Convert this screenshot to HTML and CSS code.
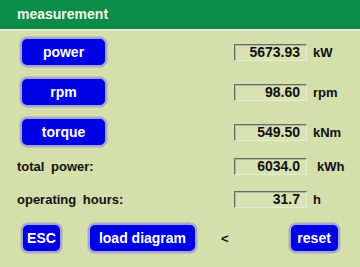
FILE: index.html
```html
<!DOCTYPE html>
<html lang="en">

<head>
    <meta charset="UTF-8" />
    <meta name="viewport" content="width=device-width, initial-scale=1.0" />
    <title>measurement</title>
    <link rel="stylesheet" href="styles.css">
</head>

<body>
    <div class="header">measurement</div>

    <div class="panel">
        <div class="row btn-row">
            <button class="btn btn-main">power</button>
            <div class="value-box">5673.93</div>
            <span class="unit">kW</span>
        </div>
        <div class="row btn-row">
            <button class="btn btn-main">rpm</button>
            <div class="value-box">98.60</div>
            <span class="unit">rpm</span>
        </div>
        <div class="row btn-row">
            <button class="btn btn-main">torque</button>
            <div class="value-box">549.50</div>
            <span class="unit">kNm</span>
        </div>

        <div class="row text-row first-text">
            <span class="label">total power:</span>
            <div class="value-box">6034.0</div>
            <span class="unit unit-wide">kWh</span>
        </div>
        <div class="row text-row">
            <span class="label">operating hours:</span>
            <div class="value-box">31.7</div>
            <span class="unit">h</span>
        </div>

        <div class="footer">
            <button class="btn btn-esc">ESC</button>
            <button class="btn btn-load">load diagram</button>
            <span class="arrow">&lt;</span>
            <button class="btn btn-reset">reset</button>
        </div>
    </div>
</body>

</html>
```

FILE: styles.css
```css
body {
    margin: 0;
    width: 360px;
    height: 267px;
    overflow: hidden;
    background: #d4dfab;
    font-family: "Liberation Sans", Arial, sans-serif;
    font-weight: bold;
    color: #111;
}

.header {
    height: 29px;
    line-height: 28px;
    padding-left: 17px;
    background: #0b8d47;
    color: #f4f8f0;
    font-size: 14px;
    border-bottom: 2px solid #e2ead0;
}

.panel {
    padding: 6px 0 0 20px;
}

.row {
    display: flex;
    align-items: center;
}

.btn-row {
    height: 30px;
    margin-bottom: 10px;
}

.text-row {
    height: 17px;
    margin-bottom: 16px;
}

.first-text {
    margin-top: 11px;
}

.btn {
    height: 30px;
    padding: 0;
    background: #0000e4;
    color: #fff;
    font-family: "Liberation Sans", Arial, sans-serif;
    font-weight: bold;
    font-size: 14px;
    border: 2px solid #a4a4d4;
    border-radius: 7px;
    box-shadow: 0 0 0 1px #c4c8b0;
    cursor: pointer;
}

.btn-main {
    width: 87px;
}

.label {
    width: 217px;
    margin-left: -3px;
    font-size: 13px;
    word-spacing: 3px;
}

.btn-row .value-box {
    margin-left: 127px;
}

.value-box {
    box-sizing: border-box;
    width: 73px;
    height: 17px;
    padding-right: 6px;
    text-align: right;
    font-size: 14px;
    line-height: 15px;
    background: #d8e2b2;
    border: 1px solid;
    border-color: #6c6c66 #e6ecd2 #e6ecd2 #6c6c66;
    box-shadow: inset 1px 1px 0 #b0b6a0;
}

.unit {
    margin-left: 6px;
    font-size: 13px;
}

.unit-wide {
    margin-left: 10px;
}

.footer {
    display: flex;
    align-items: center;
    height: 30px;
    margin-top: -1px;
}

.btn-esc {
    width: 41px;
    margin-left: 1px;
}

.btn-load {
    width: 109px;
    margin-left: 26px;
}

.arrow {
    margin-left: 24px;
    font-size: 13px;
}

.btn-reset {
    width: 51px;
    margin-left: 60px;
}
```
